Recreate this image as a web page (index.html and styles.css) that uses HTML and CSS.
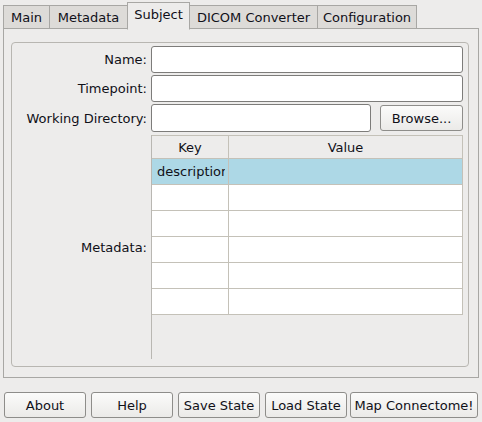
FILE: index.html
```html
<!DOCTYPE html>
<html>
<head>
<meta charset="utf-8">
<link rel="stylesheet" href="styles.css">
</head>
<body>
<div class="window">
  <div class="tabbar">
    <div class="tab w-main">Main</div>
    <div class="tab w-meta">Metadata</div>
    <div class="tab tab-active w-subj">Subject</div>
    <div class="tab w-dicom">DICOM Converter</div>
    <div class="tab w-conf">Configuration</div>
  </div>
  <div class="pane">
    <div class="group">
      <div class="form">
        <label class="lbl">Name:</label>
        <div class="field"><div class="input"></div></div>
        <label class="lbl">Timepoint:</label>
        <div class="field"><div class="input"></div></div>
        <label class="lbl">Working Directory:</label>
        <div class="field field-wd"><div class="input input-wd"></div><div class="btn btn-browse">Browse...</div></div>
        <label class="lbl lbl-meta">Metadata:</label>
        <div class="table">
          <div class="thead">
            <div class="th c-key">Key</div>
            <div class="th c-val">Value</div>
          </div>
          <div class="tr tr-sel"><div class="td c-key"><span class="clip">description</span></div><div class="td c-val"></div></div>
          <div class="tr"><div class="td c-key"></div><div class="td c-val"></div></div>
          <div class="tr"><div class="td c-key"></div><div class="td c-val"></div></div>
          <div class="tr"><div class="td c-key"></div><div class="td c-val"></div></div>
          <div class="tr"><div class="td c-key"></div><div class="td c-val"></div></div>
          <div class="tr"><div class="td c-key"></div><div class="td c-val"></div></div>
        </div>
      </div>
    </div>
  </div>
  <div class="buttons">
    <div class="btn b-about">About</div>
    <div class="btn b-help">Help</div>
    <div class="btn b-save">Save State</div>
    <div class="btn b-load">Load State</div>
    <div class="btn b-map">Map Connectome!</div>
  </div>
</div>
</body>
</html>
```
FILE: styles.css
```css
* { box-sizing: border-box; }
html, body {
  margin: 0;
  padding: 0;
  background: #edeceb;
}
body {
  width: 482px;
  height: 422px;
  overflow: hidden;
  font-family: "DejaVu Sans", sans-serif;
  font-size: 13px;
  color: #101018;
}
.window {
  display: flex;
  flex-direction: column;
}
.tabbar {
  display: flex;
  align-items: flex-end;
  padding: 0 0 0 3px;
  height: 29px;
  position: relative;
  z-index: 2;
}
.tab {
  height: 24px;
  background: #dddbd8;
  border: 1px solid #a8a7a4;
  border-bottom: 1px solid #a8a7a4;
  border-right: none;
  display: flex;
  align-items: center;
  justify-content: center;
  padding-top: 1px;
  white-space: nowrap;
}
.w-main { width: 46px; }
.w-meta { width: 78px; }
.w-subj { width: 63px; }
.w-dicom { width: 128px; }
.w-conf { width: 100px; border-right: 1px solid #a8a7a4; }
.tab-active {
  height: 28px;
  margin-bottom: -1px;
  background: #edeceb;
  border-color: #a8a7a4;
  border-right: 1px solid #a8a7a4;
  border-bottom: 1px solid #edeceb;
  padding-top: 0;
  padding-bottom: 4px;
  margin-right: -1px;
  position: relative;
  z-index: 3;
}
.pane {
  margin: -1px 3px 0 3px;
  height: 350px;
  border: 1px solid #a8a7a4;
  background: #edeceb;
  padding: 13px 9px 9px 7px;
}
.group {
  height: 325px;
  border: 1px solid #b8b6b1;
  border-radius: 4px;
  padding: 3px 5px 6px 0;
}
.form {
  display: grid;
  grid-template-columns: 135px 1fr;
  grid-template-rows: 27px 27px 28px 225px;
  column-gap: 4px;
  row-gap: 2px;
  height: 100%;
}
.lbl {
  display: flex;
  align-items: center;
  justify-content: flex-end;
  white-space: nowrap;
}
.lbl-meta { padding-top: 2px; }
.field { display: flex; }
.input {
  flex: 1;
  background: #fff;
  border: 1px solid #7d7c7a;
  border-radius: 3px;
}
.field-wd { gap: 9px; }
.btn {
  display: flex;
  align-items: center;
  justify-content: center;
  border: 1px solid #8e8d8a;
  border-radius: 3px;
  background: linear-gradient(#fbfbfa, #ebeae8);
  white-space: nowrap;
}
.btn-browse { width: 83px; margin-top: 1px; height: 26px; }
.table {
  margin-top: 1px;
  border-left: 1px solid #b9b7b2;
  display: flex;
  flex-direction: column;
}
.thead {
  display: flex;
  height: 24px;
  border-top: 1px solid #c4c1b8;
  border-bottom: 1px solid #c4c1b8;
  border-right: 1px solid #c4c1b8;
  background: #edeceb;
}
.th {
  display: flex;
  align-items: center;
  justify-content: center;
}
.c-key { width: 77px; border-right: 1px solid #c4c1b8; flex: none; }
.c-val { flex: 1; }
.tr {
  display: flex;
  height: 26px;
  background: #fff;
  border-bottom: 1px solid #c4c1b8;
  border-right: 1px solid #c4c1b8;
}
.tr-sel { background: #add8e6; }
.td {
  display: flex;
  align-items: center;
  padding: 0 3px 0 5px;
  white-space: nowrap;
}
.clip {
  display: block;
  min-width: 0;
  overflow: hidden;
}
.buttons {
  display: flex;
  margin-top: 14px;
  padding-left: 4px;
  gap: 5px;
}
.buttons .btn { height: 26px; width: 82px; }
.buttons .b-load { margin-right: -2px; }
.buttons .b-map { width: 128px; }
```
